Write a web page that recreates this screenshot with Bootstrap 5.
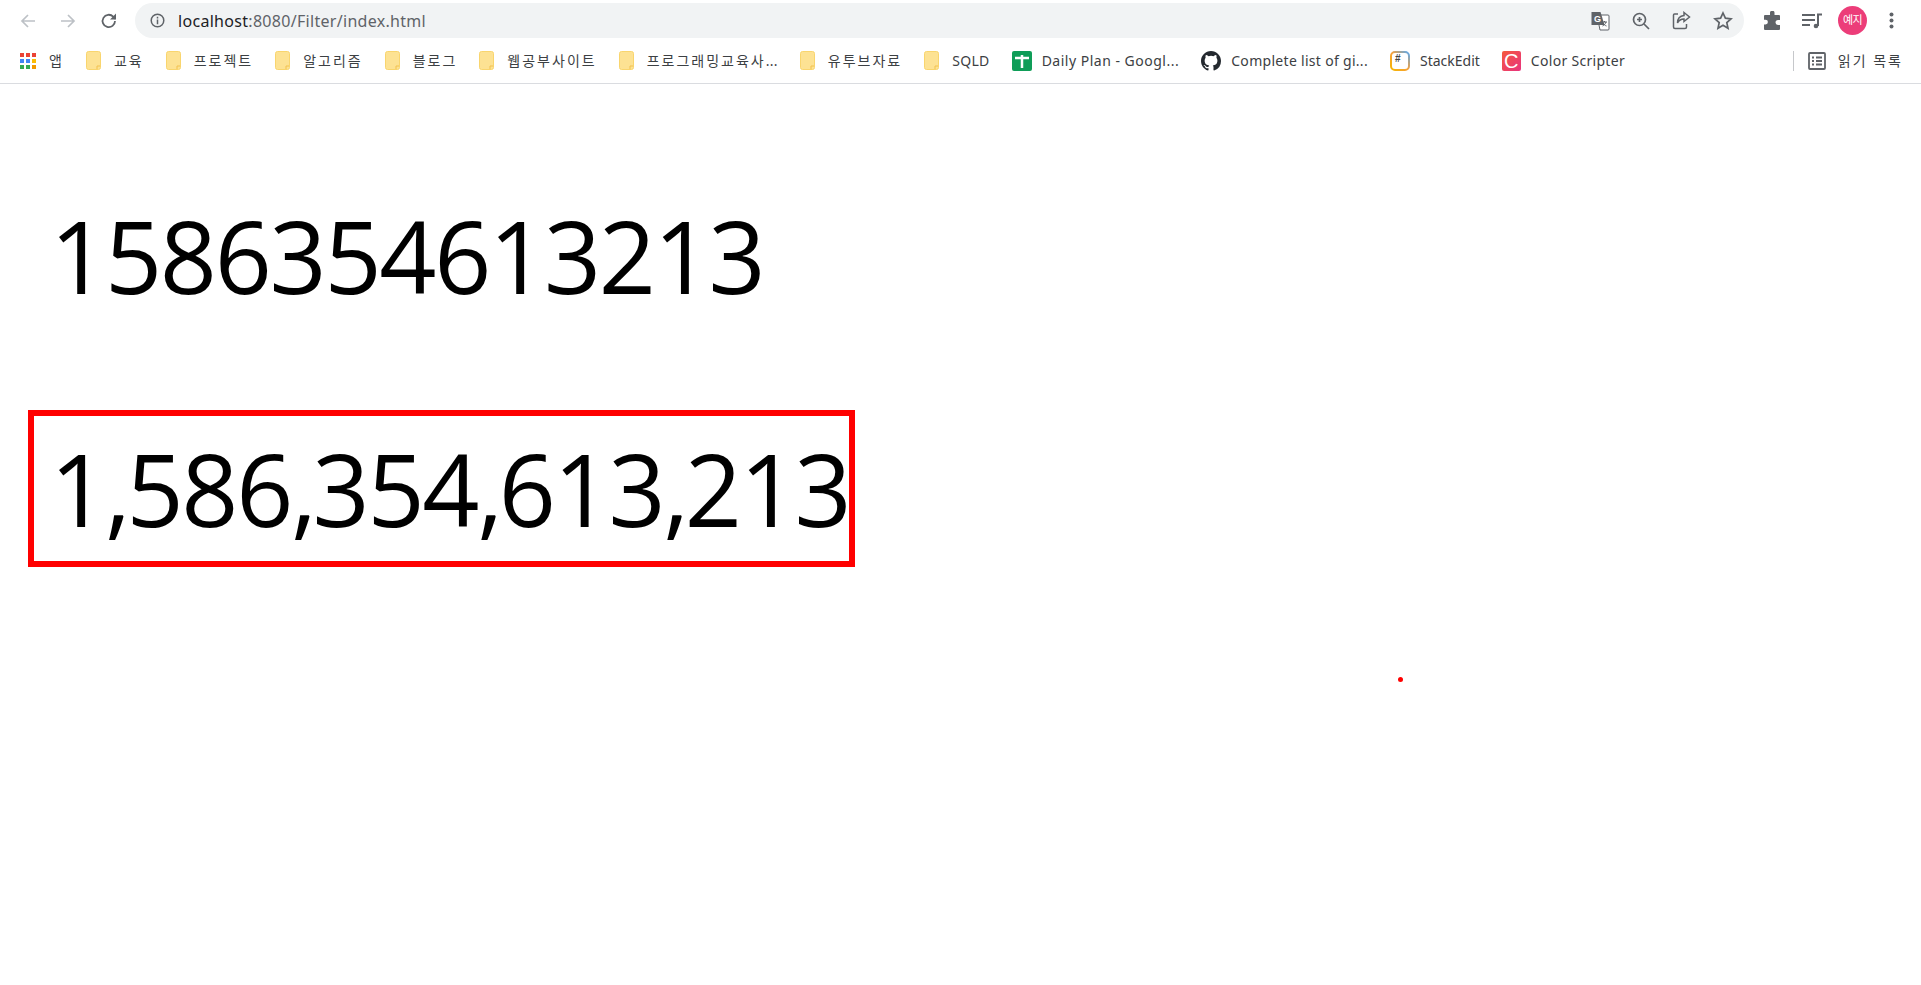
<!DOCTYPE html>
<html lang="ko">
<head>
    <meta charset="UTF-8">
    <title>index.html</title>
    <link href="https://cdn.jsdelivr.net/npm/bootstrap@5.3.0/dist/css/bootstrap.min.css" rel="stylesheet">
    <style>
        body {
            background: #fff;
            font-family: "Noto Sans", "Noto Sans CJK KR", sans-serif;
            overflow: hidden;
        }
        .top-strip {
            height: 38px;
            padding-top: 3px;
        }
        .nav-btns {
            width: 135px;
            padding-left: 20px;
            gap: 24px;
        }
        .url-pill {
            width: 1609px;
            height: 35px;
            background: #f1f3f4;
            border-radius: 18px;
            padding: 0 11px 0 15px;
        }
        .url-text {
            font-size: 16px;
            margin-left: 13px;
            color: #5f6368;
            letter-spacing: 0.3px;
        }
        .url-text b {
            font-weight: 400;
            color: #202124;
        }
        .pill-icons {
            gap: 22px;
        }
        .tool-icons {
            padding-left: 19px;
            gap: 20px;
        }
        .avatar-dot {
            width: 29px;
            height: 29px;
            background: #ec3d79;
            color: #fff;
            font-size: 11px;
            letter-spacing: -0.5px;
            margin-left: -4px;
        }
        .dots-icon {
            margin-left: 2px;
        }
        .bookmark-bar {
            height: 46px;
            border-bottom: 1px solid #dadce0;
            padding: 0 18px 0 20px;
            font-size: 14px;
            letter-spacing: 0.3px;
            color: #3c4043;
            gap: 22px;
        }
        .bm-entry {
            gap: 13px;
            white-space: nowrap;
        }
        .bm-site {
            gap: 10px;
        }
        .bm-ko {
            letter-spacing: 2px;
        }
        .bm-wide {
            letter-spacing: 0.5px;
        }
        .bm-tight {
            letter-spacing: 0;
        }
        .bm-split {
            width: 1px;
            height: 20px;
            background: #c6c8cb;
            margin-right: -8px;
        }
        .page-body {
            padding: 93px 0 0 28px;
            height: 900px;
        }
        .num-line {
            width: 827px;
            height: 157px;
            padding: 0 0 0 16px;
            border: 6px solid transparent;
            font-family: "Open Sans", sans-serif;
            font-size: 100px;
            line-height: 145px;
            letter-spacing: -2.3px;
            color: #000;
            white-space: nowrap;
        }
        .num-line + .num-line {
            margin-top: 76px;
        }
        .num-boxed {
            border-color: #f00;
        }
        .num-comma {
            letter-spacing: -4.4px;
        }
        .click-dot {
            position: absolute;
            left: 1398px;
            top: 677px;
            width: 5px;
            height: 5px;
            border-radius: 50%;
            background: #f00;
        }
    </style>
</head>
<body>
    <div class="top-strip d-flex align-items-start">
        <div class="nav-btns d-flex align-items-center" style="height:35px">
            <svg width="16" height="16" viewBox="0 0 16 16" fill="none" stroke="#bdc1c6" stroke-width="1.7"><path d="M15 8H2M8 2 2 8l6 6"/></svg>
            <svg width="16" height="16" viewBox="0 0 16 16" fill="none" stroke="#bdc1c6" stroke-width="1.7"><path d="M1 8h13M8 2l6 6-6 6"/></svg>
            <svg width="18" height="18" viewBox="0 0 18 18" fill="none" stroke="#5f6368" stroke-width="1.8"><path d="M15 9a6.2 6.2 0 1 1-1.8-4.4L15.5 7"/><path d="M16 1.5V7.6H10" fill="#5f6368" stroke="none"/></svg>
        </div>
        <div class="url-pill d-flex align-items-center">
            <svg width="15" height="15" viewBox="0 0 16 16" fill="none" stroke="#5f6368" stroke-width="1.6"><circle cx="8" cy="8" r="6.7"/><path d="M8 7v5M8 4v1.8"/></svg>
            <span class="url-text"><b>localhost</b>:8080/Filter/index.html</span>
            <div class="pill-icons d-flex align-items-center ms-auto">
                <svg width="20" height="20" viewBox="0 0 20 20"><path d="M7 4h11a1 1 0 0 1 1 1v13a1 1 0 0 1-1 1H10z" fill="#fff" stroke="#5f6368"/><path d="M1.5 1h9l4 13h-13z" fill="#5f6368"/><text x="4" y="11" font-size="9" font-weight="700" fill="#fff" font-family="Liberation Sans, sans-serif">G</text><path d="M12 11h5M14.5 10v1M16 11c-.5 2-2 3.500-3.500 4M13 12c.8 1.500 2 2.500 3.500 3" fill="none" stroke="#5f6368"/></svg>
                <svg width="18" height="18" viewBox="0 0 18 18" fill="none" stroke="#5f6368" stroke-width="1.7"><circle cx="7.500" cy="7.500" r="6"/><path d="m12 12 5 5M5 7.500h5M7.500 5v5"/></svg>
                <svg width="19" height="19" viewBox="0 0 19 19" fill="none" stroke="#5f6368" stroke-width="1.500"><path d="M6 3H2.500A1 1 0 0 0 1.500 4v12a1.500 1.500 0 0 0 1.500 1.500h10a1.500 1.500 0 0 0 1.500-1.500v-3"/><path d="M12 1.500 17.500 6 12 10.500V8c-3 0-5 1-6.500 4 0-4 2-7 6.500-7.500z"/></svg>
                <svg width="20" height="19" viewBox="0 0 20 19" fill="none" stroke="#5f6368" stroke-width="1.700"><path d="m10 2 2.400 5.200 5.600.6-4.200 3.800 1.200 5.600L10 14.300l-5 2.900 1.200-5.600L2 7.800l5.600-.6z"/></svg>
            </div>
        </div>
        <div class="tool-icons d-flex align-items-center" style="height:35px">
            <svg width="19" height="19" viewBox="0 0 19 19" fill="#5f6368"><path d="M7 1.500a2.300 2.300 0 0 1 4.500 0V4H16a1 1 0 0 1 1 1v4h-2a2.400 2.400 0 0 0 0 5h2v4a1 1 0 0 1-1 1H2a1 1 0 0 1-1-1v-4.500h1.500a2.400 2.400 0 0 0 0-4.800H1V5a1 1 0 0 1 1-1h5z"/></svg>
            <svg width="20" height="16" viewBox="0 0 20 16" fill="none" stroke="#5f6368" stroke-width="2"><path d="M0 2h13M0 7h13M0 12h8M16 13V1.500h4"/><circle cx="14" cy="13" r="2.300" fill="#5f6368" stroke="none"/></svg>
            <div class="avatar-dot rounded-circle d-flex align-items-center justify-content-center">예지</div>
            <svg width="5" height="17" viewBox="0 0 5 17" fill="#5f6368" class="dots-icon"><circle cx="2.500" cy="2.500" r="2"/><circle cx="2.500" cy="8.500" r="2"/><circle cx="2.500" cy="14.500" r="2"/></svg>
        </div>
    </div>

    <div class="bookmark-bar d-flex align-items-center">
        <div class="bm-entry d-flex align-items-center">
            <svg width="16" height="16" viewBox="0 0 16 16"><g fill="#ea4335"><rect width="4" height="4"/><rect x="6" width="4" height="4"/><rect x="12" width="4" height="4"/></g><g fill="#4285f4"><rect y="6" width="4" height="4"/><rect x="6" y="6" width="4" height="4"/></g><rect x="12" y="6" width="4" height="4" fill="#fbbc05"/><g fill="#34a853"><rect y="12" width="4" height="4"/><rect x="6" y="12" width="4" height="4"/></g><rect x="12" y="12" width="4" height="4" fill="#f29900"/></svg>
            <span class="bm-ko">앱</span>
        </div>
        <div class="bm-entry d-flex align-items-center"><svg width="15" height="19" viewBox="0 0 15 19"><rect x=".5" y=".5" width="14" height="18" rx="2" fill="#fde293" stroke="#f9d56e"/><path d="M11 18v-3h3" fill="none" stroke="#f2c14e"/></svg><span class="bm-ko">교육</span></div>
        <div class="bm-entry d-flex align-items-center"><svg width="15" height="19" viewBox="0 0 15 19"><rect x=".5" y=".5" width="14" height="18" rx="2" fill="#fde293" stroke="#f9d56e"/><path d="M11 18v-3h3" fill="none" stroke="#f2c14e"/></svg><span class="bm-ko">프로젝트</span></div>
        <div class="bm-entry d-flex align-items-center"><svg width="15" height="19" viewBox="0 0 15 19"><rect x=".5" y=".5" width="14" height="18" rx="2" fill="#fde293" stroke="#f9d56e"/><path d="M11 18v-3h3" fill="none" stroke="#f2c14e"/></svg><span class="bm-ko">알고리즘</span></div>
        <div class="bm-entry d-flex align-items-center"><svg width="15" height="19" viewBox="0 0 15 19"><rect x=".5" y=".5" width="14" height="18" rx="2" fill="#fde293" stroke="#f9d56e"/><path d="M11 18v-3h3" fill="none" stroke="#f2c14e"/></svg><span class="bm-ko">블로그</span></div>
        <div class="bm-entry d-flex align-items-center"><svg width="15" height="19" viewBox="0 0 15 19"><rect x=".5" y=".5" width="14" height="18" rx="2" fill="#fde293" stroke="#f9d56e"/><path d="M11 18v-3h3" fill="none" stroke="#f2c14e"/></svg><span class="bm-ko">웹공부사이트</span></div>
        <div class="bm-entry d-flex align-items-center"><svg width="15" height="19" viewBox="0 0 15 19"><rect x=".5" y=".5" width="14" height="18" rx="2" fill="#fde293" stroke="#f9d56e"/><path d="M11 18v-3h3" fill="none" stroke="#f2c14e"/></svg><span><span class="bm-ko">프로그래밍교육사</span>...</span></div>
        <div class="bm-entry d-flex align-items-center"><svg width="15" height="19" viewBox="0 0 15 19"><rect x=".5" y=".5" width="14" height="18" rx="2" fill="#fde293" stroke="#f9d56e"/><path d="M11 18v-3h3" fill="none" stroke="#f2c14e"/></svg><span class="bm-ko">유투브자료</span></div>
        <div class="bm-entry d-flex align-items-center"><svg width="15" height="19" viewBox="0 0 15 19"><rect x=".5" y=".5" width="14" height="18" rx="2" fill="#fde293" stroke="#f9d56e"/><path d="M11 18v-3h3" fill="none" stroke="#f2c14e"/></svg><span>SQLD</span></div>
        <div class="bm-entry bm-site d-flex align-items-center"><svg width="20" height="20" viewBox="0 0 20 20"><rect width="20" height="20" rx="2" fill="#0f9d58"/><path d="M3 7h14M10 4v13" stroke="#fff" stroke-width="2.500" fill="none"/></svg><span class="bm-wide">Daily Plan - Googl...</span></div>
        <div class="bm-entry bm-site d-flex align-items-center"><svg width="20" height="20" viewBox="0 0 16 16" fill="#24292f"><path d="M8 0C3.580 0 0 3.580 0 8c0 3.540 2.290 6.530 5.470 7.590.4.070.55-.17.55-.38 0-.19-.01-.82-.01-1.490-2.010.37-2.530-.49-2.690-.94-.09-.23-.48-.94-.82-1.130-.28-.15-.68-.52-.01-.53.63-.01 1.080.58 1.230.82.720 1.210 1.870.870 2.330.660.070-.520.280-.870.510-1.070-1.780-.2-3.640-.890-3.640-3.950 0-.870.310-1.590.820-2.150-.080-.2-.360-1.020.080-2.120 0 0 .670-.210 2.200.820a7.420 7.420 0 0 1 4 0c1.530-1.040 2.200-.820 2.200-.820.440 1.100.160 1.920.080 2.120.510.560.820 1.270.820 2.150 0 3.070-1.870 3.750-3.650 3.950.290.250.540.730.540 1.480 0 1.070-.010 1.930-.010 2.200 0 .210.150.460.550.380A8.013 8.013 0 0 0 16 8c0-4.420-3.580-8-8-8z"/></svg><span>Complete list of gi...</span></div>
        <div class="bm-entry bm-site d-flex align-items-center"><svg width="20" height="20" viewBox="0 0 20 20"><defs><linearGradient id="seGrad" x1="0" y1="1" x2="1" y2="0"><stop offset="0" stop-color="#f5b500"/><stop offset=".5" stop-color="#f7a13a"/><stop offset="1" stop-color="#5aa9f0"/></linearGradient></defs><rect x="1" y="1" width="18" height="18" rx="4" fill="#fff" stroke="url(#seGrad)" stroke-width="2"/><text x="5" y="11" font-size="10" font-weight="700" fill="#444" font-family="Liberation Sans, sans-serif">#</text></svg><span class="bm-tight">StackEdit</span></div>
        <div class="bm-entry bm-site d-flex align-items-center"><svg width="19" height="20" viewBox="0 0 19 20"><defs><linearGradient id="csGrad" x1="0" y1="0" x2="1" y2="1"><stop offset="0" stop-color="#f5593d"/><stop offset="1" stop-color="#e8337f"/></linearGradient></defs><rect width="19" height="20" rx="2" fill="url(#csGrad)"/><text x="2" y="17" font-size="20" fill="#fff" font-family="Liberation Sans, sans-serif">C</text></svg><span>Color Scripter</span></div>
        <div class="bm-split ms-auto"></div>
        <div class="bm-entry d-flex align-items-center" style="gap:12px"><svg width="18" height="18" viewBox="0 0 18 18" fill="none" stroke="#5f6368" stroke-width="1.800"><rect x="1" y="1" width="16" height="16" rx="1"/><path d="M4 5.500h2M8 5.500h6M4 9h2M8 9h6M4 12.500h2M8 12.500h6"/></svg><span class="bm-ko">읽기 목록</span></div>
    </div>

    <div class="page-body">
        <div class="num-line">1586354613213</div>
        <div class="num-line num-boxed">1<span class="num-comma">,</span>586<span class="num-comma">,</span>354<span class="num-comma">,</span>613<span class="num-comma">,</span>213</div>
    </div>
    <div class="click-dot"></div>

    <script src="https://cdn.jsdelivr.net/npm/bootstrap@5.3.0/dist/js/bootstrap.bundle.min.js"></script>
</body>
</html>
